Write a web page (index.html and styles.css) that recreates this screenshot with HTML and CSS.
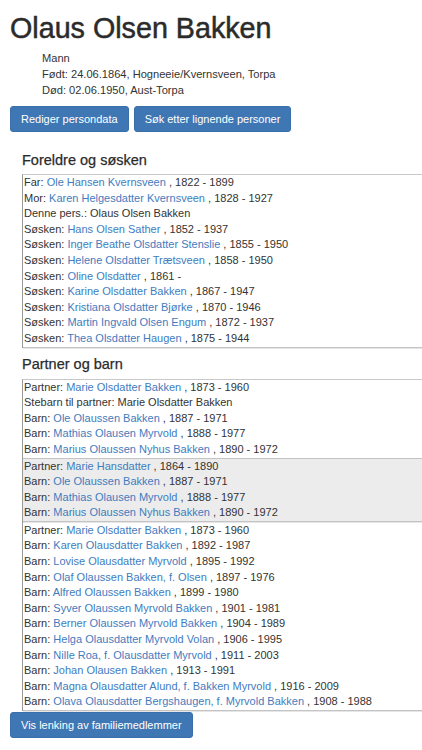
FILE: index.html
```html
<!DOCTYPE html>
<html lang="no">
<head>
<meta charset="utf-8">
<title>Olaus Olsen Bakken</title>
<link rel="stylesheet" href="styles.css">
</head>
<body>
<h1 class="title">Olaus Olsen Bakken</h1>
<div class="facts">
  <div>Mann</div>
  <div>Født: 24.06.1864, Hogneeie/Kvernsveen, Torpa</div>
  <div>Død: 02.06.1950, Aust-Torpa</div>
</div>
<div class="actions">
  <button class="btn">Rediger persondata</button>
  <button class="btn">Søk etter lignende personer</button>
</div>

<h2 class="section-title first">Foreldre og søsken</h2>
<div class="family">
  <div class="group">
    <div class="row">Far: <a href="#">Ole Hansen Kvernsveen</a> , 1822 - 1899</div>
    <div class="row">Mor: <a href="#">Karen Helgesdatter Kvernsveen</a> , 1828 - 1927</div>
    <div class="row">Denne pers.: Olaus Olsen Bakken</div>
    <div class="row">Søsken: <a href="#">Hans Olsen Sather</a> , 1852 - 1937</div>
    <div class="row">Søsken: <a href="#">Inger Beathe Olsdatter Stenslie</a> , 1855 - 1950</div>
    <div class="row">Søsken: <a href="#">Helene Olsdatter Trætsveen</a> , 1858 - 1950</div>
    <div class="row">Søsken: <a href="#">Oline Olsdatter</a> , 1861 -</div>
    <div class="row">Søsken: <a href="#">Karine Olsdatter Bakken</a> , 1867 - 1947</div>
    <div class="row">Søsken: <a href="#">Kristiana Olsdatter Bjørke</a> , 1870 - 1946</div>
    <div class="row">Søsken: <a href="#">Martin Ingvald Olsen Engum</a> , 1872 - 1937</div>
    <div class="row">Søsken: <a href="#">Thea Olsdatter Haugen</a> , 1875 - 1944</div>
  </div>
</div>

<h2 class="section-title second">Partner og barn</h2>
<div class="family">
  <div class="group">
    <div class="row">Partner: <a href="#">Marie Olsdatter Bakken</a> , 1873 - 1960</div>
    <div class="row">Stebarn til partner: Marie Olsdatter Bakken</div>
    <div class="row">Barn: <a href="#">Ole Olaussen Bakken</a> , 1887 - 1971</div>
    <div class="row">Barn: <a href="#">Mathias Olausen Myrvold</a> , 1888 - 1977</div>
    <div class="row">Barn: <a href="#">Marius Olaussen Nyhus Bakken</a> , 1890 - 1972</div>
  </div>
  <div class="group shaded">
    <div class="row">Partner: <a href="#">Marie Hansdatter</a> , 1864 - 1890</div>
    <div class="row">Barn: <a href="#">Ole Olaussen Bakken</a> , 1887 - 1971</div>
    <div class="row">Barn: <a href="#">Mathias Olausen Myrvold</a> , 1888 - 1977</div>
    <div class="row">Barn: <a href="#">Marius Olaussen Nyhus Bakken</a> , 1890 - 1972</div>
  </div>
  <div class="group">
    <div class="row">Partner: <a href="#">Marie Olsdatter Bakken</a> , 1873 - 1960</div>
    <div class="row">Barn: <a href="#">Karen Olausdatter Bakken</a> , 1892 - 1987</div>
    <div class="row">Barn: <a href="#">Lovise Olausdatter Myrvold</a> , 1895 - 1992</div>
    <div class="row">Barn: <a href="#">Olaf Olaussen Bakken, f. Olsen</a> , 1897 - 1976</div>
    <div class="row">Barn: <a href="#">Alfred Olaussen Bakken</a> , 1899 - 1980</div>
    <div class="row">Barn: <a href="#">Syver Olaussen Myrvold Bakken</a> , 1901 - 1981</div>
    <div class="row">Barn: <a href="#">Berner Olaussen Myrvold Bakken</a> , 1904 - 1989</div>
    <div class="row">Barn: <a href="#">Helga Olausdatter Myrvold Volan</a> , 1906 - 1995</div>
    <div class="row">Barn: <a href="#">Nille Roa, f. Olausdatter Myrvold</a> , 1911 - 2003</div>
    <div class="row">Barn: <a href="#">Johan Olausen Bakken</a> , 1913 - 1991</div>
    <div class="row">Barn: <a href="#">Magna Olausdatter Alund, f. Bakken Myrvold</a> , 1916 - 2009</div>
    <div class="row">Barn: <a href="#">Olava Olausdatter Bergshaugen, f. Myrvold Bakken</a> , 1908 - 1988</div>
  </div>
</div>
<div class="actions bottom">
  <button class="btn">Vis lenking av familiemedlemmer</button>
</div>
</body>
</html>
```
FILE: styles.css
```css
html, body {
  margin: 0;
  padding: 0;
  overflow-x: hidden;
  background: #fff;
}
body {
  font-family: "Liberation Sans", Arial, sans-serif;
  font-size: 11px;
  color: #333;
  padding: 0 0 0 10px;
}
.title {
  font-size: 28.7px;
  font-weight: normal;
  line-height: 31px;
  margin: 13px 0 0 0;
  color: #2b2b2b;
  -webkit-text-stroke: 0.5px #2b2b2b;
}
.facts {
  margin: 6px 0 0 32px;
  line-height: 16px;
  font-size: 11.1px;
}
.actions {
  display: flex;
  gap: 5px;
  margin-top: 8px;
}
.btn {
  font-family: inherit;
  font-size: 11px;
  color: #fff;
  background: #3f77b5;
  border: 1px solid #3a6fa9;
  border-radius: 3px;
  height: 26px;
  padding: 0 10px;
  line-height: 24px;
}
.section-title {
  font-size: 14.5px;
  font-weight: normal;
  color: #2b2b2b;
  margin: 0 0 0 12px;
  line-height: 16px;
  -webkit-text-stroke: 0.25px #2b2b2b;
}
.section-title.first {
  margin-top: 20px;
  margin-bottom: 6px;
}
.section-title.second {
  margin-top: 8px;
  margin-bottom: 7px;
}
.family {
  margin: 0 0 0 12px;
  width: 440px;
  border-top: 1px solid #c8c8c8;
  border-left: 1px solid #9a9a9a;
}
.group {
  border-bottom: 1px solid #c4c4c4;
}
.group.shaded,
.group:last-child {
  box-shadow: 0 1px 0 #e6e6e6;
  margin-bottom: 1px;
}
.shaded {
  background: #ececec;
}
.row {
  line-height: 15.6px;
  padding-left: 1px;
  white-space: nowrap;
}
a {
  color: #3f7cc0;
  text-decoration: none;
}
.actions.bottom {
  margin-top: 1px;
}
```
